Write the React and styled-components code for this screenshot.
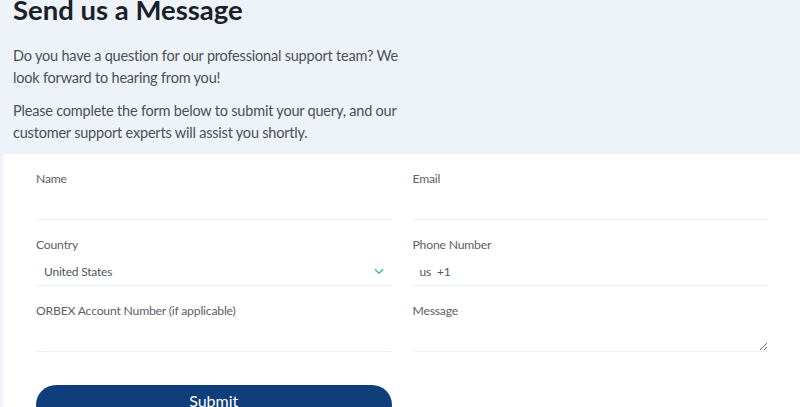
import React from "react";
import styled, { createGlobalStyle } from "styled-components";

const GlobalStyle = createGlobalStyle`
  html, body {
    margin: 0;
    padding: 0;
    background: #eef3f9;
    font-family: Lato, "Open Sans", sans-serif;
  }
  * {
    box-sizing: border-box;
  }
`;

const Page = styled.div`
  background: #eef3f9;
  min-height: 407px;
  overflow: hidden;
`;

const Intro = styled.section`
  padding: 0 13px 10px;
`;

const Heading = styled.h2`
  margin: -8px 0 0;
  font-size: 27.5px;
  line-height: 36px;
  font-weight: 700;
  color: #1b2129;
`;

const Lead = styled.p`
  margin: 11px 0 0;
  max-width: 400px;
  font-size: 14.5px;
  letter-spacing: -0.2px;
  line-height: 22px;
  color: #4a5058;

  &:first-of-type {
    margin-top: 17px;
  }
`;

const FormPanel = styled.form`
  margin-left: 3px;
  background: #fff;
  padding: 16px 32px 0 33px;
  display: grid;
  grid-template-columns: 1fr 1fr;
  column-gap: 21px;
  row-gap: 16px;
`;

const Field = styled.label`
  display: flex;
  flex-direction: column;
`;

const Label = styled.span`
  font-size: 12.2px;
  letter-spacing: -0.2px;
  line-height: 18px;
  color: #5c6168;
`;

const Control = styled.div`
  display: flex;
  align-items: center;
  height: 28px;
  margin-top: 4px;
  border-bottom: 1px solid #ebf1f8;
  padding: 0 8px;
  font-size: 12px;
  letter-spacing: -0.2px;
  color: #4f555c;
`;

const TextInput = styled.input`
  flex: 1;
  min-width: 0;
  border: none;
  outline: none;
  background: transparent;
  font: inherit;
  letter-spacing: inherit;
  color: inherit;
  padding: 0;
`;

const SelectValue = styled.span`
  flex: 1;
`;

const Prefix = styled.span`
  margin-left: -1px;
  margin-right: 6px;
`;

const MessageArea = styled.textarea`
  margin-top: 4px;
  height: 28px;
  border: none;
  border-bottom: 1px solid #ebf1f8;
  outline: none;
  resize: vertical;
  font: inherit;
  font-size: 12px;
  padding: 4px 8px;
  background: transparent;
`;

const SubmitButton = styled.button`
  margin-top: 17px;
  height: 40px;
  border: none;
  border-radius: 20px;
  background: #0f3f7a;
  color: #fff;
  font-family: inherit;
  font-size: 16px;
  padding: 0 0 9px;
  cursor: pointer;
`;

const Chevron = () => (
  <svg width="10" height="7" viewBox="0 0 10 7" fill="none">
    <path d="M1 1.2 5 5.2 9 1.2" stroke="#3cc47c" strokeWidth="1.4" />
  </svg>
);

export default function App() {
  return (
    <Page>
      <GlobalStyle />
      <Intro>
        <Heading>Send us a Message</Heading>
        <Lead>
          Do you have a question for our professional support team? We look
          forward to hearing from you!
        </Lead>
        <Lead>
          Please complete the form below to submit your query, and our customer
          support experts will assist you shortly.
        </Lead>
      </Intro>
      <FormPanel onSubmit={(e) => e.preventDefault()}>
        <Field>
          <Label>Name</Label>
          <Control>
            <TextInput type="text" />
          </Control>
        </Field>
        <Field>
          <Label>Email</Label>
          <Control>
            <TextInput type="email" />
          </Control>
        </Field>
        <Field>
          <Label>Country</Label>
          <Control>
            <SelectValue>United States</SelectValue>
            <Chevron />
          </Control>
        </Field>
        <Field>
          <Label>Phone Number</Label>
          <Control>
            <Prefix>us</Prefix>
            <TextInput type="tel" defaultValue="+1" />
          </Control>
        </Field>
        <Field>
          <Label>ORBEX Account Number (if applicable)</Label>
          <Control>
            <TextInput type="text" />
          </Control>
        </Field>
        <Field>
          <Label>Message</Label>
          <MessageArea />
        </Field>
        <SubmitButton type="submit">Submit</SubmitButton>
      </FormPanel>
    </Page>
  );
}
